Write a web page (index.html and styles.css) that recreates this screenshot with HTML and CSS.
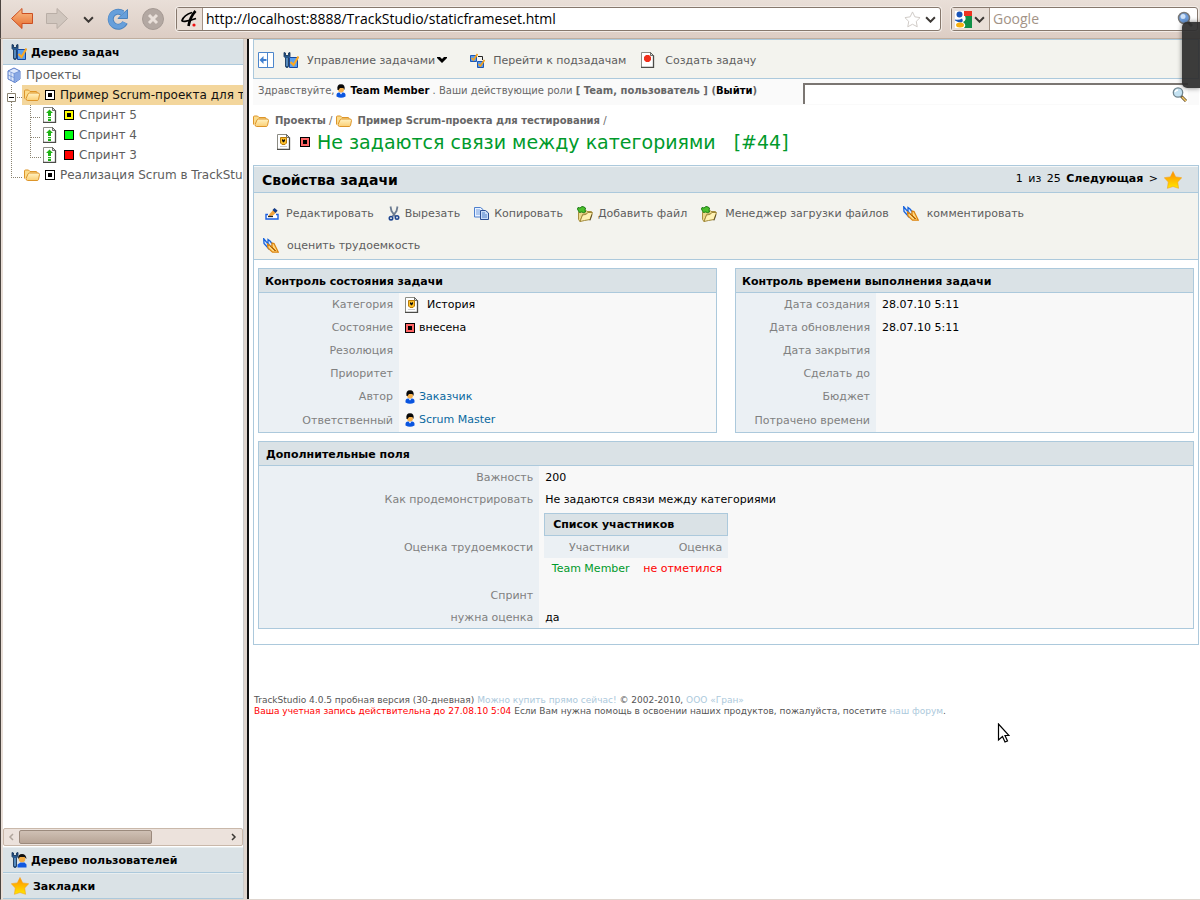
FILE: index.html
```html
<!DOCTYPE html>
<html lang="ru">
<head>
	<meta charset="UTF-8">
	<title>TrackStudio</title>
	<link rel="stylesheet" href="styles.css">
</head>
<body>
	<svg class="defs" aria-hidden="true">
		<defs>
			<linearGradient id="g-orange" x1="0" y1="0" x2="0" y2="1"><stop offset="0" stop-color="#fbc08a"/><stop offset="1" stop-color="#e56a2c"/></linearGradient>
			<linearGradient id="g-star" x1="0" y1="0" x2="0" y2="1"><stop offset="0" stop-color="#ff8a00"/><stop offset="1" stop-color="#ffe800"/></linearGradient>
			<linearGradient id="g-folder" x1="0" y1="0" x2="0" y2="1"><stop offset="0" stop-color="#fff3c4"/><stop offset="1" stop-color="#fbcf74"/></linearGradient>
		</defs>
		<symbol id="i-star" viewBox="0 0 18 18"><path d="M9 .5l2.7 5.4 6 .8-4 4.3.9 6.3L9 15.5l-5.6 1.8.9-6.3-4-4.3 6-.8z" fill="url(#g-star)" stroke="#f5a21a" stroke-width=".6"/></symbol>
		<symbol id="i-folder" viewBox="0 0 16 14"><path d="M.5 10.500V3q0-1 1-1h3l1.500 1.500h6q1 0 1 1V6" fill="#fbdc8c" stroke="#dd952a"/><path d="M3.500 12.500q-1.500 0-1.500-2L4 6q.5-1 1.500-1H14q1.500 0 1.500 1.500l-1 5q-.3 1-1.300 1z" fill="url(#g-folder)" stroke="#dd952a"/></symbol>
		<symbol id="i-page" viewBox="0 0 14 16"><path d="M.5.500h9l3 3v12H.5z" fill="#fff" stroke="#8c8c84"/><path d="M12.500 3.500v12H0" fill="none" stroke="#4c4c48" stroke-width="1.300"/><path d="M9.500.500v3h3z" fill="#ddd" stroke="#4c4c48" stroke-width=".8"/></symbol>
		<symbol id="i-sprint" viewBox="0 0 14 16"><use href="#i-page"/><path d="M6.500 2.500L10 6H8v3H5V6H3zM5 10h3v1.200H5zM5 12h3v2H5z" fill="#1fb414"/></symbol>
		<symbol id="i-story" viewBox="0 0 14 16"><use href="#i-page"/><path d="M3.500 3.500h6V9L8 10.500H5L3.500 9z" fill="#fbbf2a" stroke="#b87a08"/><path d="M5 5l1.500 1L8 5v2L6.500 8.500 5 7z" fill="#111"/><path d="M3 12.500h7" stroke="#ccc"/></symbol>
		<symbol id="i-newpage" viewBox="0 0 14 16"><use href="#i-page"/><path d="M5 3h3l2 2v3l-2 2H5L3 8V5z" fill="#f0301c"/></symbol>
		<symbol id="i-cube" viewBox="0 0 14 16"><path d="M1 4l6-3 6 3v8l-5 3.500L1 12z" fill="#dde8fb" stroke="#5578c8"/><path d="M7 6.500v9l6-3.500V4z" fill="#88a8e4"/><path d="M1 4l6 2.500L13 4M7 6.500v9M4 5.500v8M1 8l6 2.500" stroke="#6286d0" stroke-width=".7" fill="none"/></symbol>
		<symbol id="i-task" viewBox="0 0 16 16"><path d="M1 .5v4l1.500 1.500v8q0 1.500 1.500 1.500t1.500-1.500V6L7 4.500v-4L5.500 1v2.500h-3V1z" fill="#27598f" stroke="#0e2c50" stroke-width=".8"/><path d="M4 6v8" stroke="#86bcec"/><path d="M6.500 5.500h8v10h-8z" fill="#5a9fee" stroke="#1547a0"/><path d="M7.500 10l3 3L15.500 4.500" fill="none" stroke="#f9a826" stroke-width="2.200"/></symbol>
		<symbol id="i-users" viewBox="0 0 16 16"><path d="M1 .5v4l1.500 1.500v8q0 1.500 1.500 1.500t1.500-1.500V6L7 4.500v-4L5.500 1v2.500h-3V1z" fill="#27598f" stroke="#0e2c50" stroke-width=".8"/><path d="M4 6v8" stroke="#86bcec"/><path d="M6.500 15.500v-3l3-2h4l2 2v3z" fill="#1158e0"/><circle cx="11" cy="7" r="3.300" fill="#f3ac42"/><path d="M7 7q0-5 4-5t4.500 5l-2-2H9z" fill="#111"/></symbol>
		<symbol id="i-user" viewBox="0 0 10 14"><path d="M.5 11q0-2.500 2.500-2.500h4q2.500 0 2.500 2.500v1.500Q5 15 .5 12.500z" fill="#0a55e0"/><path d="M3.500 8.500h3L5 10.500z" fill="#fff"/><circle cx="5" cy="5.500" r="3" fill="#f5b04c"/><path d="M1.500 6Q.5.200 5 .2T8.500 6l-1.200-2L4 4 2.500 6z" fill="#080808"/></symbol>
		<symbol id="i-sub" viewBox="0 0 15 15"><path d="M.5 2.500h6v6h-6zM7.500 8.500h6v6h-6z" fill="#5a9cec" stroke="#1c57b4"/><path d="M8 3.500h4.500V7" fill="none" stroke="#222"/><path d="M1.500 5l2 2L7.500 1M8.500 11l2 2L14.500 7" fill="none" stroke="#f4a01c" stroke-width="1.700"/></symbol>
		<symbol id="i-panel" viewBox="0 0 16 16"><path d="M.5.500h15v15H.5zM9.500.500v15" fill="#fff" stroke="#4c86cc"/><path d="M1.500 8l4-4v3h3v2h-3v3z" fill="#3f7fd0"/></symbol>
		<symbol id="i-edit" viewBox="0 0 14 13"><path d="M3 7.500H1V12h12V7.500h-2" fill="#fff" stroke="#1a5ee0" stroke-width="1.400"/><path d="M3 9.500l2-3L9.500 1.500l3 2.500L8 8.500z" fill="#f3a43a"/><path d="M7.500 3L9.500 1l3 2.500L10.500 6z" fill="#123d8c"/><path d="M3 9.500h5" stroke="#222" stroke-width="1.300"/></symbol>
		<symbol id="i-cut" viewBox="0 0 12 15"><path d="M2.500.500L3.500 5l4 5.500M9.500.500L8.500 5l-4 5.500" fill="none" stroke="#6c7c92" stroke-width="1.800"/><circle cx="3" cy="12.200" r="1.700" fill="none" stroke="#1d4590" stroke-width="1.600"/><circle cx="9" cy="11.500" r="1.700" fill="none" stroke="#1d4590" stroke-width="1.600"/></symbol>
		<symbol id="i-copy" viewBox="0 0 15 13"><path d="M.5.500h6l2.500 2v7.500H.5z" fill="#e8f1ff" stroke="#4d7fcd"/><path d="M2 3h4M2 5h5M2 7h5" stroke="#76a0df"/><path d="M6.500 3.500h5l3 2.500v6.500h-8z" fill="#c8dcf8" stroke="#2c4f94"/><path d="M8 6h3M8 8h5M8 10h5" stroke="#5080c8"/></symbol>
		<symbol id="i-addfile" viewBox="0 0 16 16"><path d="M1.500 6v7.500L3 15.500 6 8h8.500V5.500H10L8.500 4z" fill="#ecd88a" stroke="#a89040"/><path d="M3 15.500L5.500 9q4 0 5.500-2.500h4.500L13 13.500q-6 1-10 2z" fill="#fff2b4" stroke="#a08838"/><path d="M1 1.500l2 .5L5 .5 7 1l1.500 1-.5 2 .5 2-2 .5-2-.5-2 .5L1.500 5 .5 3z" fill="#4cc02c" stroke="#1b7c14"/><path d="M13 14.500l2-6" stroke="#4a3c18" stroke-width=".8"/></symbol>
		<symbol id="i-pencils" viewBox="0 0 16 15"><path d="M.7.700L1 5.500l4.500 5L6 6.500 3 3.500zM5 1.500V6l4 4 .5-4L7 3z" fill="#d8e8ff" stroke="#1763dc" stroke-width="1.300"/><path d="M4.500 6L5 10l4.500 4.200h5.800L11 5.500 9 5v4z" fill="#ffd880" stroke="#dc8410" stroke-width="1.300"/><path d="M7 8l5 5M9 9l4 4" stroke="#b86808"/></symbol>
		<symbol id="i-find" viewBox="0 0 16 15"><path d="M9 9l5 5" stroke="#5d4a2c" stroke-width="3"/><path d="M10 10l4 4" stroke="#f6cb69" stroke-width="1.600"/><circle cx="6" cy="5.500" r="4.700" fill="#c4e2f2" stroke="#71858f" stroke-width="1.300"/><path d="M3 5q.5-2 3-2" fill="none" stroke="#fff" stroke-width="1.300"/></symbol>
		<symbol id="i-down" viewBox="0 0 10 6"><path d="M1 1l4 4 4-4" fill="none" stroke="#3c3835" stroke-width="1.800"/></symbol>
		<symbol id="t-root" viewBox="0 0 19 20"><path d="M8.500 0v8M8.500 17v3M14 12.500h5" stroke="#8a8371" stroke-dasharray="1 1" fill="none"/><path d="M4.500 8.500h8v8h-8z" fill="#fff" stroke="#8a8371"/><path d="M6 12.500h5" stroke="#000"/></symbol>
		<symbol id="t-line" viewBox="0 0 19 20"><path d="M8.500 0v20" stroke="#8a8371" stroke-dasharray="1 1"/></symbol>
		<symbol id="t-tee" viewBox="0 0 19 20"><path d="M8.500 0v20M9 12.500h10" stroke="#8a8371" stroke-dasharray="1 1"/></symbol>
		<symbol id="t-end" viewBox="0 0 19 20"><path d="M8.500 0v12M8 12.500h11" stroke="#8a8371" stroke-dasharray="1 1"/></symbol>
	</svg>

	<div class="browser">
		<button class="nav-btn back" aria-label="Назад"><svg width="24" height="24" viewBox="0 0 24 24"><path d="M1.500 11.500L12 1.500v5h10.500v10H12v5z" fill="url(#g-orange)" stroke="#cc4f22"/></svg></button>
		<button class="nav-btn forward" aria-label="Вперёд"><svg width="24" height="24" viewBox="0 0 24 24"><path d="M22.500 11.500L12 1.500v5H1.500v10H12v5z" fill="#d0c6be" stroke="#b9aea6"/></svg></button>
		<button class="nav-btn history" aria-label="История"><svg width="11" height="7"><use href="#i-down"/></svg></button>
		<button class="nav-btn reload" aria-label="Обновить"><svg width="22" height="22" viewBox="0 0 22 22"><path d="M18 14.500A7.500 7.500 0 1 1 15.500 5" fill="none" stroke="#4a82bd" stroke-width="6"/><path d="M20.500 1.500v9H11l3.500-3.500z" fill="#669fdb" stroke="#4a82bd"/><path d="M17.700 14.500A7.500 7.500 0 1 1 16 5.500" fill="none" stroke="#669fdb" stroke-width="4.400"/></svg></button>
		<button class="nav-btn stop" aria-label="Стоп"><svg width="22" height="22" viewBox="0 0 22 22"><circle cx="11" cy="11" r="10.500" fill="#b3a8a2" stroke="#a59a94"/><path d="M7 7l8 8M15 7l-8 8" stroke="#e9e0da" stroke-width="3"/></svg></button>
		<div class="field address">
			<span class="favicon"><svg width="18" height="18" viewBox="0 0 18 18"><path d="M12 2.500Q4 5 2 10.500q0 1 3 .8Q12 10 16 8.500" fill="none" stroke="#000" stroke-width="1.800"/><path d="M15.500 1Q10 7 8.500 16" fill="none" stroke="#000" stroke-width="2.600"/><circle cx="14" cy="15" r="1.600" fill="#e11"/></svg></span>
			<input type="text" aria-label="Адрес" value="http://localhost:8888/TrackStudio/staticframeset.html">
			<svg width="17" height="17" viewBox="0 0 18 18"><path d="M9 1l2.500 5.200 5.500.8-4 4 1 5.700L9 14l-5 2.700L5 11 1 7l5.500-.8z" fill="#fff" stroke="#cdc8c4"/></svg>
			<svg class="drop" width="11" height="7"><use href="#i-down"/></svg>
		</div>
		<div class="field search">
			<span class="engine">
				<svg width="17" height="17" viewBox="0 0 17 17"><path d="M0 0h17v17H0z" fill="#fff"/><path d="M9 0h8v5H9z" fill="#e32"/><path d="M10 5h7v12H9q3-3-1-6 4-2 2-6z" fill="#109048"/><circle cx="4.500" cy="3.500" r="3" fill="#1a55b8"/><path d="M0 8.500q4 1 7-1 2 3-1 4-3 0-6-2z" fill="#1a55b8"/><ellipse cx="5" cy="14" rx="4" ry="2.500" fill="#f8b010"/></svg>
				<svg width="11" height="7"><use href="#i-down"/></svg>
			</span>
			<input type="text" aria-label="Поиск Google" placeholder="Google">
			<svg width="16" height="17" viewBox="0 0 16 17"><path d="M10 10l5 5" stroke="#555" stroke-width="3"/><circle cx="7" cy="7" r="5.500" fill="#6d9ddc" stroke="#777" stroke-width="1.500"/><circle cx="6" cy="5.500" r="2.500" fill="#cfe2f8"/></svg>
		</div>
		<div class="overlay"></div>
	</div>

	<div class="frames">
		<div class="side">
			<h2 class="side-title"><svg width="16" height="16"><use href="#i-task"/></svg>Дерево задач</h2>
			<ul class="tree">
				<li class="root"><svg width="14" height="16"><use href="#i-cube"/></svg><a href="#">Проекты</a></li>
				<li><svg width="19" height="20"><use href="#t-root"/></svg><span class="node selected"><svg width="16" height="14"><use href="#i-folder"/></svg><i class="state dot"></i><a href="#">Пример Scrum-проекта для тестирования</a></span></li>
				<li><svg width="19" height="20"><use href="#t-line"/></svg><svg width="19" height="20"><use href="#t-tee"/></svg><span class="node sprint"><svg width="14" height="16"><use href="#i-sprint"/></svg><i class="state yellow dot"></i><a href="#">Спринт 5</a></span></li>
				<li><svg width="19" height="20"><use href="#t-line"/></svg><svg width="19" height="20"><use href="#t-tee"/></svg><span class="node sprint"><svg width="14" height="16"><use href="#i-sprint"/></svg><i class="state green"></i><a href="#">Спринт 4</a></span></li>
				<li><svg width="19" height="20"><use href="#t-line"/></svg><svg width="19" height="20"><use href="#t-end"/></svg><span class="node sprint"><svg width="14" height="16"><use href="#i-sprint"/></svg><i class="state red"></i><a href="#">Спринт 3</a></span></li>
				<li><svg width="19" height="20"><use href="#t-end"/></svg><span class="node"><svg width="16" height="14"><use href="#i-folder"/></svg><i class="state dot"></i><a href="#">Реализация Scrum в TrackStudio</a></span></li>
			</ul>
			<div class="scrollbar">
				<svg width="15" height="10" viewBox="0 0 15 10"><path d="M9 2L6 5l3 3" fill="none" stroke="#b0a59c" stroke-width="1.500"/></svg>
				<span class="thumb"></span>
				<svg class="end" width="15" height="10" viewBox="0 0 15 10"><path d="M5 2l3 3-3 3" fill="none" stroke="#3c3835" stroke-width="1.500"/></svg>
			</div>
			<h2 class="side-title"><svg width="16" height="16"><use href="#i-users"/></svg>Дерево пользователей</h2>
			<h2 class="side-title"><svg width="18" height="18"><use href="#i-star"/></svg>Закладки</h2>
		</div>
		<div class="splitter"></div>

		<div class="main">
			<div class="menu">
				<a href="#" aria-label="Скрыть дерево"><svg width="16" height="16"><use href="#i-panel"/></svg></a>
				<a href="#" class="manage"><svg width="16" height="16"><use href="#i-task"/></svg>Управление задачами<svg class="caret" width="10" height="6" viewBox="0 0 10 6"><path d="M0 0h3l2 2 2-2h3v1L5 6 0 1z" fill="#000"/></svg></a>
				<a href="#"><svg width="15" height="15"><use href="#i-sub"/></svg>Перейти к подзадачам</a>
				<a href="#" class="create"><svg width="14" height="16"><use href="#i-newpage"/></svg>Создать задачу</a>
			</div>
			<div class="hello">
				<p>Здравствуйте,<svg width="10" height="14"><use href="#i-user"/></svg><a href="#">Team Member</a> . Ваши действующие роли <b>[ Team, пользователь ] (<a href="#">Выйти</a>)</b></p>
				<form class="find">
					<input type="text" aria-label="Поиск">
					<button type="button" aria-label="Найти"><svg width="16" height="15"><use href="#i-find"/></svg></button>
				</form>
			</div>
			<div class="crumbs"><svg width="16" height="14"><use href="#i-folder"/></svg><a href="#">Проекты</a> / <svg width="16" height="14"><use href="#i-folder"/></svg><a href="#">Пример Scrum-проекта для тестирования</a> /</div>
			<h1><svg width="14" height="16"><use href="#i-story"/></svg><i class="state pink dot"></i>Не задаются связи между категориями<span>[#44]</span></h1>

			<div class="task">
				<div class="task-head">
					<h2>Свойства задачи</h2>
					<span class="pager">1 из 25 <a href="#">Следующая</a> &gt;</span>
					<svg width="18" height="18"><use href="#i-star"/></svg>
				</div>
				<div class="actions">
					<a href="#" class="near"><svg width="18" height="13"><use href="#i-edit"/></svg>Редактировать</a>
					<a href="#" class="near"><svg width="12" height="15"><use href="#i-cut"/></svg>Вырезать</a>
					<a href="#" class="near"><svg width="15" height="13"><use href="#i-copy"/></svg>Копировать</a>
					<a href="#" class="near"><svg width="16" height="16"><use href="#i-addfile"/></svg>Добавить файл</a>
					<a href="#"><svg width="16" height="16"><use href="#i-addfile"/></svg>Менеджер загрузки файлов</a>
					<a href="#"><svg width="16" height="15"><use href="#i-pencils"/></svg>комментировать</a>
					<a href="#"><svg width="16" height="15"><use href="#i-pencils"/></svg>оценить трудоемкость</a>
				</div>
				<div class="boxes">
					<div class="box">
						<h3>Контроль состояния задачи</h3>
						<table>
							<tr><th>Категория</th><td><svg class="wide" width="14" height="16"><use href="#i-story"/></svg>История</td></tr>
							<tr><th>Состояние</th><td><i class="state pink dot"></i>внесена</td></tr>
							<tr><th>Резолюция</th><td></td></tr>
							<tr><th>Приоритет</th><td></td></tr>
							<tr><th>Автор</th><td><svg width="10" height="14"><use href="#i-user"/></svg><a href="#">Заказчик</a></td></tr>
							<tr class="last"><th>Ответственный</th><td><svg width="10" height="14"><use href="#i-user"/></svg><a href="#">Scrum Master</a></td></tr>
						</table>
					</div>
					<div class="box">
						<h3>Контроль времени выполнения задачи</h3>
						<table>
							<tr><th>Дата создания</th><td>28.07.10 5:11</td></tr>
							<tr><th>Дата обновления</th><td>28.07.10 5:11</td></tr>
							<tr><th>Дата закрытия</th><td></td></tr>
							<tr><th>Сделать до</th><td></td></tr>
							<tr><th>Бюджет</th><td></td></tr>
							<tr class="last"><th>Потрачено времени</th><td></td></tr>
						</table>
					</div>
				</div>
				<div class="box extra">
					<h3>Дополнительные поля</h3>
					<table>
						<tr><th>Важность</th><td>200</td></tr>
						<tr><th>Как продемонстрировать</th><td>Не задаются связи между категориями</td></tr>
						<tr><th>Оценка трудоемкости</th><td>
							<table class="votes">
								<caption>Список участников</caption>
								<tr><th>Участники</th><th>Оценка</th></tr>
								<tr><td class="who">Team Member</td><td class="none">не отметился</td></tr>
							</table>
						</td></tr>
						<tr><th>Спринт</th><td></td></tr>
						<tr><th>нужна оценка</th><td>да</td></tr>
					</table>
				</div>
			</div>

			<div class="footer">
				TrackStudio 4.0.5 пробная версия (30-дневная) <a href="#">Можно купить прямо сейчас!</a> © 2002-2010, <a href="#">ООО «Гран»</a><br>
				<span class="warn">Ваша учетная запись действительна до 27.08.10 5:04</span> Если Вам нужна помощь в освоении наших продуктов, пожалуйста, посетите <a href="#">наш форум</a>.
			</div>
			<svg class="cursor" width="13" height="21" viewBox="0 0 13 21"><path d="M1.500 1v16l4-3.500 2.500 5.500 2.500-1-2.500-5.500H12z" fill="#fff" stroke="#000" stroke-width="1.200"/></svg>
		</div>
	</div>
</body>
</html>
```

FILE: styles.css
```css
* {
	box-sizing: border-box;
}
html, body {
	margin: 0;
	padding: 0;
	height: 100%;
}
body {
	display: flex;
	flex-direction: column;
	overflow: hidden;
	background: #fff;
	color: #000;
	font-family: "DejaVu Sans", Verdana, sans-serif;
	font-size: 11px;
}
a {
	color: inherit;
	text-decoration: none;
}
h1, h2, h3, p, ul, form {
	margin: 0;
	padding: 0;
}
svg {
	flex: none;
	vertical-align: middle;
}
.defs {
	position: absolute;
	width: 0;
	height: 0;
}

/* browser toolbar */
.browser {
	position: relative;
	display: flex;
	flex: none;
	align-items: center;
	height: 39px;
	padding: 0 0 0 9px;
	background: linear-gradient(#e9dfd8, #dccdc4);
	border-left: 1px solid #4b4440;
	border-bottom: 1px solid #bfae9f;
}
.nav-btn {
	display: flex;
	padding: 0;
	border: 0;
	background: none;
}
.forward {
	margin-left: 11px;
}
.history {
	margin-left: 14px;
}
.reload {
	margin-left: 13px;
}
.stop {
	margin-left: 13px;
}
.field {
	display: flex;
	align-items: center;
	height: 24px;
	background: #fff;
	border: 1px solid #86786d;
	border-radius: 3px;
	box-shadow: 0 0 0 1px #f3ece7;
}
.field input {
	flex: 1;
	min-width: 0;
	height: 22px;
	padding: 0 3px 2px;
	border: 0;
	background: none;
	font-family: "Open Sans", sans-serif;
	font-size: 14px;
}
.field input::placeholder {
	color: #a39387;
	opacity: 1;
}
.address {
	flex: 1;
	margin-left: 12px;
	padding-right: 4px;
}
.drop {
	margin-left: 4px;
}
.favicon, .engine {
	display: flex;
	align-items: center;
	height: 100%;
	padding: 0 4px 0 3px;
	background: #e9dfd8;
	border-right: 1px solid #a39387;
}
.engine {
	gap: 2px;
}
.search {
	width: 247px;
	margin: 0 2px 0 10px;
	padding-right: 4px;
}
.overlay {
	position: absolute;
	z-index: 2;
	top: 22px;
	right: 0;
	width: 18px;
	height: 66px;
	background: rgba(45, 45, 45, .93);
	border-radius: 5px 0 0 5px;
	box-shadow: 0 0 5px rgba(0, 0, 0, .5);
}

/* left frame */
.frames {
	display: flex;
	flex: 1;
	min-height: 0;
	border-left: 1px solid #4b4440;
	border-bottom: 1px solid #dfd5ce;
}
.side {
	display: flex;
	flex: none;
	flex-direction: column;
	width: 242px;
	border-left: 2px solid #e9dfd8;
}
.side-title {
	display: flex;
	flex: none;
	align-items: center;
	gap: 4px;
	height: 26px;
	padding-left: 8px;
	background: #dae2e6;
	border-top: 1px solid #e8eef0;
	border-bottom: 1px solid #acc9dc;
	font-size: 11px;
}
.tree {
	flex: 1;
	overflow: hidden;
	list-style: none;
	color: #5d5d5d;
	font-size: 12px;
	white-space: nowrap;
}
.tree li {
	display: flex;
	height: 20px;
	align-items: center;
}
.tree .root {
	gap: 5px;
	padding-left: 4px;
}
.node {
	display: flex;
	flex: 1;
	align-items: center;
	min-width: 0;
	height: 20px;
	padding-left: 2px;
}
.node a {
	min-width: 0;
	overflow: hidden;
}
.node .state {
	margin: 0 5px;
}
.sprint .state {
	margin-left: 7px;
}
.selected {
	background: #f3d69c;
	color: #111;
}
.state {
	display: inline-flex;
	flex: none;
	width: 10px;
	height: 10px;
	align-items: center;
	justify-content: center;
	background: #fff;
	border: 1px solid #000;
	vertical-align: middle;
}
.dot::before {
	content: "";
	width: 4px;
	height: 4px;
	background: #000;
}
.yellow {
	background: #ff0;
}
.green {
	background: #0f1;
}
.red {
	background: #f00;
}
.pink {
	background: #f66;
}
.scrollbar {
	display: flex;
	flex: none;
	align-items: center;
	height: 18px;
	margin-bottom: 1px;
	background: #ece2dc;
	border: 1px solid #c9b8aa;
	border-radius: 2px;
}
.thumb {
	width: 133px;
	height: 14px;
	background: linear-gradient(#cfc0b4, #b8a597);
	border: 1px solid #9b8a7d;
	border-radius: 2px;
}
.end {
	margin-left: auto;
}
.splitter {
	flex: none;
	width: 6px;
	background: #dfd5ce;
	border-left: 1px solid #ccc;
	border-right: 2px solid #111;
}

/* right frame */
.main {
	flex: 1;
	min-width: 0;
	padding: 0 1px 0 4px;
}
.menu {
	display: flex;
	align-items: center;
	height: 40px;
	padding: 2px 4px 0;
	background: #f3f3ee;
	border: 1px solid #acc9dc;
	color: #5d5d5d;
}
.menu a {
	display: flex;
	align-items: center;
	gap: 8px;
}
.menu .manage {
	margin: 0 23px 0 9px;
}
.menu .caret {
	margin-left: -6px;
}
.menu .create {
	gap: 10px;
	margin-left: 15px;
}
.hello {
	display: flex;
	height: 26px;
	padding: 4px 11px 0 5px;
	background: #fafafa;
	color: #666;
	font-size: 10px;
}
.hello p {
	flex: 1;
	line-height: 16px;
}
.hello p svg {
	margin: 0 4px 0 2px;
}
.hello p a {
	color: #000;
	font-weight: bold;
}
.find {
	display: flex;
	align-items: center;
	width: 385px;
	height: 21px;
	background: #fff;
	border: solid #7b7672;
	border-width: 2px 0 0 2px;
}
.find input {
	flex: 1;
	padding: 0 4px;
	border: 0;
	background: none;
}
.find button {
	padding: 0;
	border: 0;
	background: none;
}
.crumbs {
	padding-top: 8px;
	color: #666;
	font-size: 10px;
	line-height: 16px;
}
.crumbs svg {
	margin-right: 6px;
}
.crumbs a {
	font-weight: bold;
}
h1 {
	display: flex;
	align-items: center;
	height: 26px;
	padding-left: 24px;
	color: #009a2b;
	font-size: 19px;
	font-weight: normal;
}
h1 .state {
	margin: 0 7px 0 9px;
}
h1 span {
	margin-left: 18px;
}
.task {
	margin-top: 10px;
	padding-bottom: 15px;
	border: 1px solid #acc9dc;
}
.task-head {
	display: flex;
	align-items: center;
	height: 27px;
	padding: 0 16px 0 8px;
	background: #dae2e6;
	border-top: 1px solid #f4f7f8;
	border-bottom: 1px solid #acc9dc;
}
.task-head h2 {
	flex: 1;
	font-size: 14px;
}
.pager {
	margin-right: 6px;
	padding-bottom: 2px;
	word-spacing: 2px;
}
.pager a {
	font-weight: bold;
}
.actions {
	display: flex;
	flex-wrap: wrap;
	row-gap: 5px;
	padding: 7px 9px 0;
	background: #f3f3ee;
	border-bottom: 1px solid #acc9dc;
	color: #5d5d5d;
	line-height: 16px;
}
.actions a {
	display: flex;
	align-items: center;
	gap: 8px;
	height: 27px;
	margin-right: 14px;
}
.actions .near {
	gap: 5px;
}
.boxes {
	display: flex;
	gap: 18px;
	padding: 8px 4px;
}
.box {
	flex: 1;
	border: 1px solid #acc9dc;
}
.box h3 {
	height: 24px;
	padding-left: 6px;
	background: #dae2e6;
	border-bottom: 1px solid #acc9dc;
	font-size: 11px;
	line-height: 25px;
}
.box table {
	width: 100%;
	border-spacing: 0;
	background: #f8f8f8;
}
.box th {
	width: 140px;
	height: 23px;
	padding: 0 6px 0 0;
	background: #ebf0f4;
	color: #808080;
	font-weight: normal;
	text-align: right;
}
.box .last th {
	height: 24px;
}
.box td {
	padding: 0 6px;
}
.box td a {
	color: #0a69a0;
}
.box td > svg, .box td > .state {
	margin-right: 4px;
}
.box td > .wide {
	margin-right: 8px;
}
.extra {
	margin: 0 4px;
}
.extra h3 {
	padding-left: 7px;
}
.extra th {
	width: 30%;
	height: 22px;
}
.box .votes {
	width: 184px;
	margin: 3px 0 6px -1px;
}
.votes caption {
	height: 23px;
	padding-left: 8px;
	background: #dae2e6;
	border: 1px solid #acc9dc;
	font-weight: bold;
	line-height: 22px;
	text-align: left;
}
.votes th {
	width: auto;
}
.votes td {
	height: 20px;
	text-align: right;
}
.who {
	color: #009a2b;
}
.none {
	color: #f00;
}
.footer {
	padding: 50px 0 0 1px;
	color: #555;
	font-size: 9px;
	line-height: 11px;
}
.footer a {
	color: #acc9dc;
}
.footer .warn {
	color: #f00;
}
.cursor {
	position: absolute;
	top: 723px;
	left: 997px;
}
```
